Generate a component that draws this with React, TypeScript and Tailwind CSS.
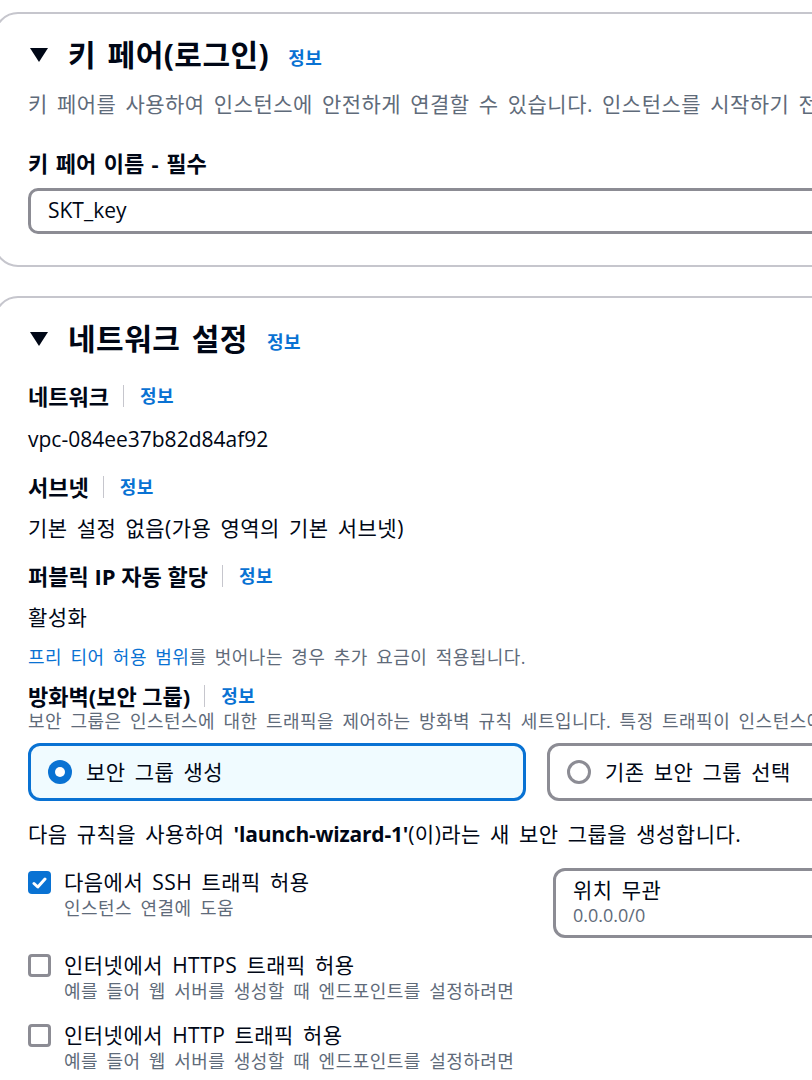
import React from "react";

const F = "font-['Open_Sans','Noto_Sans_CJK_KR',sans-serif]";

function Info() {
  return <span className="text-[18px] font-bold text-[#0972d3] leading-[28px] [word-spacing:0]">정보</span>;
}

function Label({ text }: { text: string }) {
  return (
    <div className="flex items-center h-[28px]">
      <span className="text-[22px] font-bold text-[#000716] leading-[28px] [word-spacing:0] tracking-normal">{text}</span>
      <span className="ml-[14px] mr-[16px] w-px h-[22px] bg-[#c6c6cd]" />
      <Info />
    </div>
  );
}

function Triangle() {
  return (
    <svg width="18" height="14" viewBox="0 0 18 14" className="shrink-0">
      <path d="M0 0 H18 L9 14 Z" fill="#000716" />
    </svg>
  );
}

function Heading({ text }: { text: string }) {
  return (
    <div className="flex items-center h-[40px] pl-[2px]">
      <Triangle />
      <span className="ml-[20px] text-[30px] font-bold text-[#000716] leading-[40px]">{text}</span>
      <span className="ml-[19px] mt-[6px]">
        <Info />
      </span>
    </div>
  );
}

function Checkbox({ checked }: { checked: boolean }) {
  if (checked) {
    return (
      <span className="block w-[23px] h-[23px] rounded-[4px] bg-[#0972d3] flex items-center justify-center shrink-0">
        <svg width="15" height="12" viewBox="0 0 15 12">
          <path d="M2 6.5 L5.8 10 L13 2" stroke="white" strokeWidth="3" fill="none" strokeLinecap="round" strokeLinejoin="round" />
        </svg>
      </span>
    );
  }
  return <span className="block w-[23px] h-[23px] rounded-[4px] border-[3px] border-[#8c8c94] bg-white shrink-0" />;
}

function CheckRow({ checked, title, sub }: { checked: boolean; title: string; sub: string }) {
  return (
    <div className="flex items-start">
      <span className="block mt-[3px] shrink-0"><Checkbox checked={checked} /></span>
      <div className="ml-[13px]">
        <div className="text-[21px] leading-[28px] whitespace-nowrap">{title}</div>
        <div className="text-[18px] leading-[24px] text-[#5f6b7a] whitespace-nowrap">{sub}</div>
      </div>
    </div>
  );
}

export default function App() {
  return (
    <div className={"w-[812px] h-[1080px] overflow-hidden bg-white text-[#000716] [word-spacing:0.2em] tracking-[0.03em] " + F}>
      <div className="pt-[12px] ml-[-6px] w-[1200px]">
        {/* Card 1 */}
        <div className="border-[2px] border-[#c6c6cd] rounded-[24px] pt-[21px] pb-[31px] pl-[32px]">
          <Heading text="키 페어(로그인)" />
          <div className="mt-[15px] text-[21px] leading-[28px] text-[#5f6b7a] whitespace-nowrap">
            키 페어를 사용하여 인스턴스에 안전하게 연결할 수 있습니다. 인스턴스를 시작하기 전에 선택한 키 페어에 대한 액세스 권한이 있는지 확인하세요.
          </div>
          <div className="mt-[31px] text-[22px] font-bold leading-[28px] [word-spacing:0.08em] tracking-normal">키 페어 이름 - 필수</div>
          <div className="mt-[11px] h-[46px] w-[1100px] border-[3px] border-[#8c8c94] rounded-[10px] flex items-center pl-[17px] text-[21px] tracking-normal">
            SKT_key
          </div>
        </div>

        {/* Card 2 */}
        <div className="mt-[29px] border-[2px] border-[#c6c6cd] rounded-[24px] pt-[21px] pb-[40px] pl-[32px]">
          <Heading text="네트워크 설정" />
          <div className="mt-[23px]"><Label text="네트워크" /></div>
          <div className="mt-[15px] text-[21px] leading-[28px] tracking-normal">vpc-084ee37b82d84af92</div>
          <div className="mt-[20px]"><Label text="서브넷" /></div>
          <div className="mt-[13px] text-[21px] leading-[28px]">기본 설정 없음(가용 영역의 기본 서브넷)</div>
          <div className="mt-[20px]"><Label text="퍼블릭 IP 자동 할당" /></div>
          <div className="mt-[13px] text-[21px] leading-[28px]">활성화</div>
          <div className="mt-[14px] text-[18px] leading-[24px] text-[#5f6b7a] whitespace-nowrap">
            <span className="text-[#0972d3]">프리 티어 허용 범위</span>를 벗어나는 경우 추가 요금이 적용됩니다.
          </div>
          <div className="mt-[13px]"><Label text="방화벽(보안 그룹)" /></div>
          <div className="text-[18px] leading-[22px] text-[#5f6b7a] whitespace-nowrap">
            보안 그룹은 인스턴스에 대한 트래픽을 제어하는 방화벽 규칙 세트입니다. 특정 트래픽이 인스턴스에 도달하도록 허용하는 규칙을 추가합니다.
          </div>
          <div className="mt-[11px] flex gap-[21px]">
            <div className="w-[498px] h-[58px] border-[3px] border-[#0972d3] bg-[#f0fbff] rounded-[12px] flex items-center pl-[17px]">
              <span className="w-[24px] h-[24px] rounded-full bg-[#0972d3] flex items-center justify-center shrink-0">
                <span className="block w-[10px] h-[10px] rounded-full bg-white" />
              </span>
              <span className="ml-[14px] text-[21px] leading-[28px]">보안 그룹 생성</span>
            </div>
            <div className="w-[498px] h-[58px] border-[3px] border-[#8c8c94] bg-white rounded-[12px] flex items-center pl-[17px]">
              <span className="block w-[24px] h-[24px] rounded-full border-[3px] border-[#8c8c94] shrink-0" />
              <span className="ml-[14px] text-[21px] leading-[28px]">기존 보안 그룹 선택</span>
            </div>
          </div>
          <div className="mt-[19px] text-[21px] leading-[28px] whitespace-nowrap">
            다음 규칙을 사용하여 <span className="font-bold [word-spacing:0] tracking-[-0.01em]">'launch-wizard-1'</span>(이)라는 새 보안 그룹을 생성합니다.
          </div>

          <div className="mt-[20px] flex">
            <div className="w-[525px]">
              <CheckRow checked title="다음에서 SSH 트래픽 허용" sub="인스턴스 연결에 도움" />
            </div>
            <div className="w-[500px] h-[70px] border-[3px] border-[#8c8c94] rounded-[12px] pl-[17px] pt-[6px]">
              <div className="text-[21px] leading-[26px]">위치 무관</div>
              <div className="text-[18px] leading-[24px] text-[#5f6b7a] tracking-normal">0.0.0.0/0</div>
            </div>
          </div>

          <div className="mt-[13px]">
            <CheckRow checked={false} title="인터넷에서 HTTPS 트래픽 허용" sub="예를 들어 웹 서버를 생성할 때 엔드포인트를 설정하려면" />
          </div>
          <div className="mt-[18px]">
            <CheckRow checked={false} title="인터넷에서 HTTP 트래픽 허용" sub="예를 들어 웹 서버를 생성할 때 엔드포인트를 설정하려면" />
          </div>
        </div>
      </div>
    </div>
  );
}
